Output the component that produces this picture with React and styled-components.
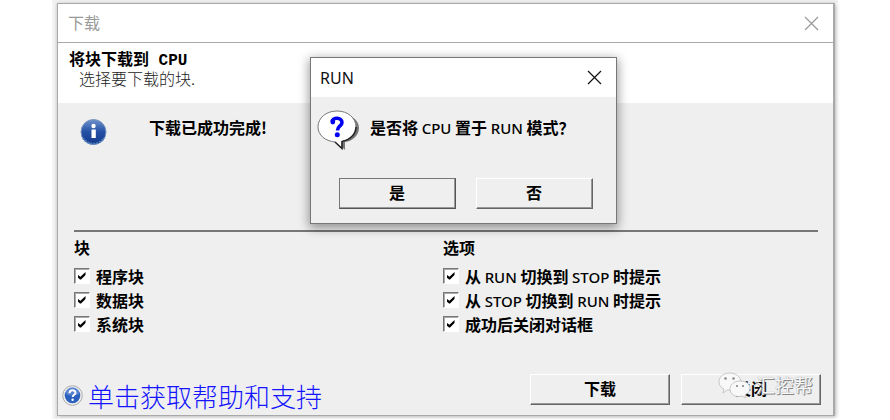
import React, {useState} from 'react';
import styled, {createGlobalStyle} from 'styled-components';

const GlobalStyle = createGlobalStyle`
  * {
    box-sizing: border-box;
  }
  body {
    margin: 0;
    background: #fff;
    color: #000;
    font-family: "Noto Sans CJK SC", sans-serif;
    font-size: 16px;
    line-height: 24px;
  }
`;
const Page = styled.main`
  padding: 3px 55px 0 52px;
  background: linear-gradient(#f1f1f1, #f1f1f1) 52px 0 / calc(100% - 104px) 3px no-repeat;
`;
const Backdrop = styled.div`
  padding: 0 0 3px 5px;
  background: linear-gradient(90deg, #f8f8f8, #ececec 5px, #fff 6px);
`;
const Window = styled.section`
  position: relative;
  border: 1px solid #a9a9a9;
  border-right-width: 2px;
  background: #efefef;
  box-shadow: 1px 1px 4px rgba(0, 0, 0, 0.3);
`;
const TitleBar = styled.header`
  display: flex;
  align-items: center;
  justify-content: space-between;
  height: ${props => (props.$dialog ? 39 : 38)}px;
  padding: 0 14px 0 ${props => (props.$dialog ? 9 : 10)}px;
  background: #fff;
  color: ${props => (props.$dialog ? '#111' : '#999')};
`;
const Title = styled.h1`
  margin: 0;
  font-family: "Noto Sans", "Noto Sans CJK SC", sans-serif;
  font-size: 16px;
  font-weight: 400;
`;
const CloseButton = styled.button`
  display: flex;
  padding: 0;
  border: 0;
  background: none;
  color: inherit;
`;
const Intro = styled.div`
  height: 61px;
  padding: 9px 11px;
  border-top: 1px solid #a9a9a9;
  background: #fff;
`;
const IntroTitle = styled.h2`
  margin: 0;
  font-family: "Liberation Mono", "Noto Sans CJK SC", monospace;
  font-size: 16px;
  line-height: 18px;
  font-weight: 700;
`;
const IntroText = styled.p`
  margin: 0 10px;
  font-size: 16px;
  line-height: 16px;
  font-weight: 300;
  color: #222;
`;
const Message = styled.div`
  display: flex;
  gap: 41px;
  height: 127px;
  padding: 12px 22px;
  font-weight: 700;
`;
const Groups = styled.div`
  display: grid;
  grid-template-columns: 1fr 375px;
  margin: 0 15px 0 16px;
  padding-top: 3px;
  border-top: 2px solid #777;
`;
const Group = styled.fieldset`
  min-width: 0;
  margin: 0;
  padding: 0;
  border: 0;
`;
const Legend = styled.legend`
  padding: 0 0 5px;
  font-weight: 700;
`;
const Option = styled.label`
  display: flex;
  align-items: center;
  gap: 6px;
  height: 24px;
  font-weight: 700;
  white-space: pre;
`;
const Checkbox = styled.input`
  appearance: none;
  width: 16px;
  height: 16px;
  margin: 0;
  border: 1px solid;
  border-color: #777 #fff #fff #777;
  background: #fff;
  box-shadow: inset 1px 1px 0 #aaa;
`;
const CheckCell = styled.span`
  display: grid;

  > * {
    grid-area: 1 / 1;
  }
  svg {
    pointer-events: none;
  }
`;
const Latin = styled.span`
  font-family: "Noto Sans", sans-serif;
  font-size: 15px;
  font-weight: 500;
`;
const Footer = styled.footer`
  display: flex;
  align-items: flex-start;
  justify-content: space-between;
  padding: 38px 12px 0 4px;
`;
const HelpLink = styled.a`
  display: flex;
  align-items: center;
  gap: 5px;
  height: 41px;
  padding-top: 2px;
  color: #1414ff;
  font-size: 26px;
  font-weight: 300;
  text-decoration: none;
`;
const Buttons = styled.div`
  position: relative;
  display: flex;
  gap: ${props => props.$gap}px;
`;
const PushButton = styled.button`
  width: ${props => props.$width}px;
  height: 31px;
  padding: 0 0 4px;
  border: 1px solid;
  border-color: ${props => (props.$default ? '#777 #555 #555 #777' : '#fff #666 #666 #fff')};
  box-shadow: inset -1px -1px 0 #999;
  background: #efefef;
  color: #000;
  font: inherit;
  font-weight: 700;
`;
const Dialog = styled.div`
  position: absolute;
  top: 53px;
  left: 252px;
  width: 307px;
  border: 1px solid #777;
  background: #efefef;
  box-shadow: 0 3px 10px 1px rgba(0, 0, 0, 0.4);
`;
const Question = styled.div`
  display: flex;
  gap: 10px;
  height: 81px;
  padding: 13px 6px;
  font-weight: 700;
  white-space: pre;
`;
const QuestionText = styled.p`
  margin: 0;
  padding-top: 5px;
`;
const DialogActions = styled.div`
  display: flex;
  justify-content: center;
  padding: 0 0 14px 4px;
`;
const Watermark = styled.div`
  position: absolute;
  right: 8px;
  top: -5px;
  display: flex;
  align-items: center;
  gap: 4px;
  color: #f6f6f6;
  font-size: 19px;
  line-height: 32px;
  text-shadow: 1px 1px 0 #888, 0 0 1px #999;
  pointer-events: none;
`;

const CloseIcon = () => (
    <svg width="15" height="15" viewBox="0 0 15 15" fill="none" stroke="currentColor" strokeWidth="1.2">
        <path d="M1 1 14 14M14 1 1 14"/>
    </svg>
);

const CheckIcon = () => (
    <svg width="16" height="16" viewBox="0 0 16 16" fill="#000">
        <path d="M4 7 6.5 8.7 11.5 4v3L7 11.5H6L4 9.7Z"/>
    </svg>
);

const InfoIcon = () => (
    <svg width="28" height="30" viewBox="0 0 28 30">
        <defs>
            <linearGradient id="info" x2="0" y2="1">
                <stop offset="0" stopColor="#6f91cc"/>
                <stop offset=".5" stopColor="#2350a5"/>
                <stop offset="1" stopColor="#15378b"/>
            </linearGradient>
        </defs>
        <circle cx="13.5" cy="17" r="12.5" fill="url(#info)" stroke="#7893bd"/>
        <path d="M3 23a12.5 12.5 0 0 0 21 0" fill="none" stroke="#4d7fba" strokeWidth="2" strokeDasharray="2 1"/>
        <circle cx="13.5" cy="11" r="2.2" fill="#fff"/>
        <path d="M11.5 14.5h4.3v8.500h-4.300Z" fill="#fff"/>
    </svg>
);

const HelpIcon = () => (
    <svg width="21" height="21" viewBox="0 0 21 21">
        <circle cx="10.5" cy="10.5" r="9.8" fill="#eee" stroke="#aaa"/>
        <circle cx="10.5" cy="10.5" r="7.8" fill="#2c60bd"/>
        <path d="M3.5 9a7 7 0 0 1 14 0Q10 12 3.5 9" fill="#6f9ade" opacity=".6"/>
        <path d="M7.5 8.3c0-4 6-4 6-.5 0 2-2.8 2-2.8 4.3" fill="none" stroke="#fff" strokeWidth="2"/>
        <circle cx="10.6" cy="14.7" r="1.2" fill="#fff"/>
    </svg>
);

const QuestionIcon = () => (
    <svg width="43" height="42" viewBox="0 0 43 42">
        <path d="M23 4c11 0 19 6 19 14 0 7-6 13-14 14v8l-8-8C11 31 4 25 4 18 4 10 12 4 23 4Z" fill="#777"/>
        <path d="M20 1c11 0 19 7 19 16 0 7-6 13-14 14.5v7L18 32C8 31 1 25 1 17 1 8 9 1 20 1Z" fill="#fff" stroke="#777"/>
        <path d="M39 17c0 7-6 13-14 14.5v7L18 32" fill="none" stroke="#222" strokeWidth="1.5"/>
        <path d="M15 11.5C15.5 7 25 7 25 12.5 25 16 20.5 16 20.5 20.5" fill="none" stroke="#0000f5" strokeWidth="3.6"/>
        <circle cx="15.8" cy="12" r="2.4" fill="#0000f5"/>
        <circle cx="20.3" cy="24.8" r="2.5" fill="#0000f5"/>
    </svg>
);

const ChatIcon = () => (
    <svg width="34" height="26" viewBox="0 0 34 26" fill="#f8f8f8" stroke="#bbb" strokeWidth=".8">
        <path d="M12 1C5 1 1 5 1 10c0 3 2 6 5 7l-1 4 4-3c9 1 14-3 14-8 0-5-5-9-11-9Z"/>
        <path d="M22 9c-6 0-10 4-10 8 0 5 5 9 12 7l4 2-1-3c3-2 5-4 5-7 0-4-4-7-10-7Z"/>
        <g fill="#888" stroke="none">
            <circle cx="7.5" cy="6.5" r="1.3"/>
            <circle cx="15.5" cy="6.5" r="1.3"/>
            <circle cx="19" cy="14" r="1.1"/>
            <circle cx="25" cy="14" r="1.1"/>
        </g>
    </svg>
);

// Latin words sit lighter than the Chinese text around them
const Mixed = ({text}) => text.split(/([A-Z]+)/).map((part, i) => (
    i % 2 ? <Latin key={i}>{part}</Latin> : part
));

const CheckOption = ({text}) => {
    const [checked, setChecked] = useState(true);
    return (
        <Option>
            <CheckCell>
                <Checkbox type="checkbox" checked={checked} onChange={() => setChecked(!checked)}/>
                {checked && <CheckIcon/>}
            </CheckCell>
            <span><Mixed text={text}/></span>
        </Option>
    );
};

const groups = [
    {title: '块', options: ['程序块', '数据块', '系统块']},
    {title: '选项', options: ['从 RUN 切换到 STOP 时提示', '从 STOP 切换到 RUN 时提示', '成功后关闭对话框']},
];

const App = () => (
    <Page>
        <GlobalStyle/>
        <Backdrop>
            <Window>
                <TitleBar>
                    <Title>下载</Title>
                    <CloseButton aria-label="关闭"><CloseIcon/></CloseButton>
                </TitleBar>
                <Intro>
                    <IntroTitle>将块下载到 CPU</IntroTitle>
                    <IntroText>选择要下载的块.</IntroText>
                </Intro>
                <Message>
                    <InfoIcon/>
                    <span>下载已成功完成!</span>
                </Message>
                <Groups>
                    {groups.map(group => (
                        <Group key={group.title}>
                            <Legend>{group.title}</Legend>
                            {group.options.map(text => <CheckOption key={text} text={text}/>)}
                        </Group>
                    ))}
                </Groups>
                <Footer>
                    <HelpLink href="#help"><HelpIcon/>单击获取帮助和支持</HelpLink>
                    <Buttons $gap={11}>
                        <PushButton $width={140}>下载</PushButton>
                        <PushButton $width={140}>关闭</PushButton>
                        <Watermark><ChatIcon/>汇控帮</Watermark>
                    </Buttons>
                </Footer>
                <Dialog role="dialog" aria-labelledby="run-title">
                    <TitleBar $dialog>
                        <Title as="h2" id="run-title">RUN</Title>
                        <CloseButton aria-label="关闭"><CloseIcon/></CloseButton>
                    </TitleBar>
                    <Question>
                        <QuestionIcon/>
                        <QuestionText><Mixed text="是否将 CPU 置于 RUN 模式？"/></QuestionText>
                    </Question>
                    <DialogActions>
                        <Buttons $gap={20}>
                            <PushButton $width={117} $default>是</PushButton>
                            <PushButton $width={117}>否</PushButton>
                        </Buttons>
                    </DialogActions>
                </Dialog>
            </Window>
        </Backdrop>
    </Page>
);

export default App;
